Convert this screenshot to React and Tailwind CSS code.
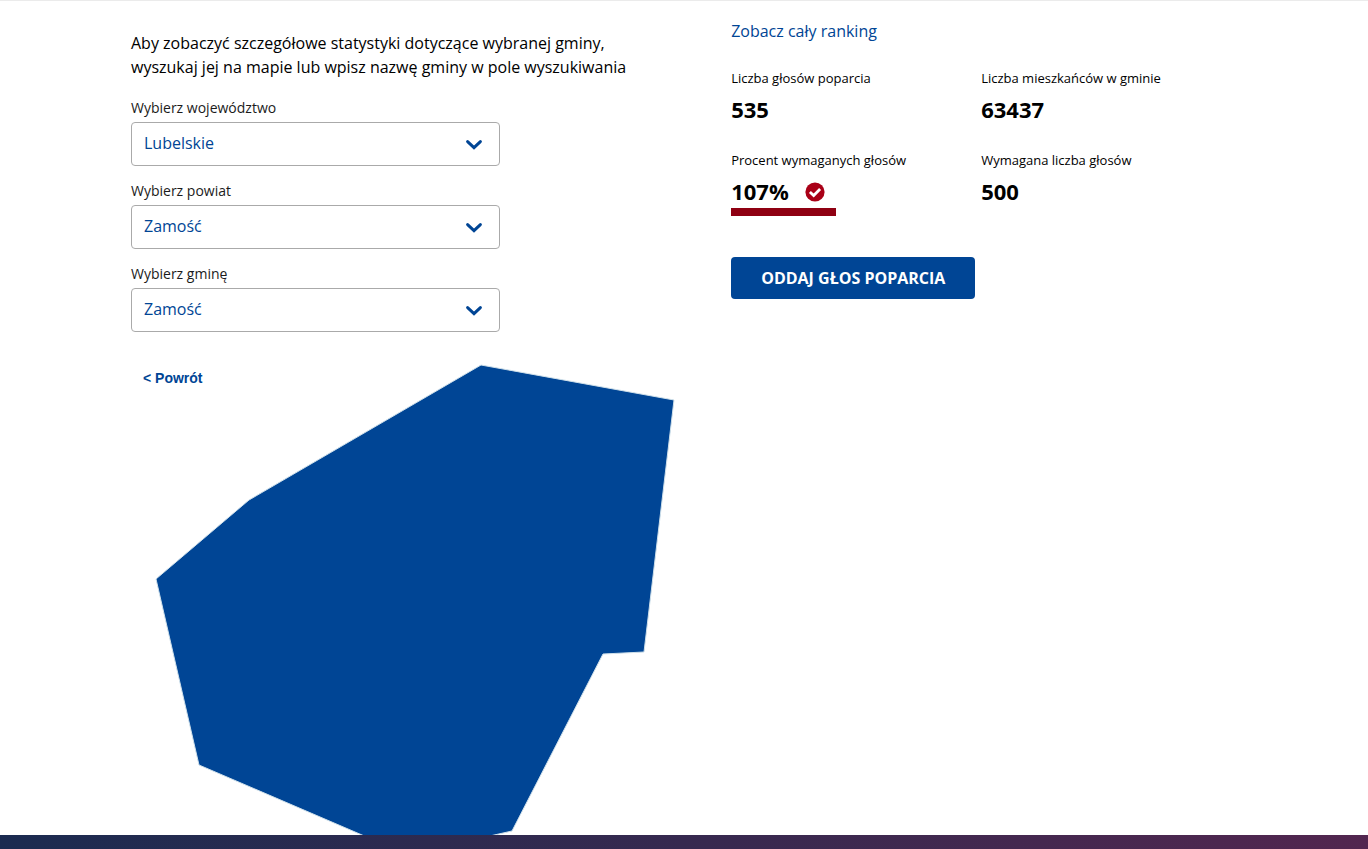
import React, { useState } from "react";

const REGIONS = {
  voivodeships: ["Lubelskie", "Mazowieckie", "Podkarpackie"],
  counties: ["Zamość", "Lublin", "Chełm"],
  communes: ["Zamość", "Lublin", "Chełm"],
};

const SelectField = ({ id, label, value, options, onChange }) => (
  <div className="flex flex-col gap-1">
    <label htmlFor={id} className="text-sm leading-5 text-[#1b1b1b]">
      {label}
    </label>
    <div className="relative">
      <select
        id={id}
        value={value}
        onChange={(e) => onChange(e.target.value)}
        className="h-11 w-full appearance-none rounded border border-[#aaaaaa] bg-white px-3 pb-0.5 text-base leading-6 text-[#004595]"
      >
        {options.map((option) => (
          <option key={option} value={option}>
            {option}
          </option>
        ))}
      </select>
      <svg
        className="pointer-events-none absolute right-4 top-4 h-3 w-5"
        viewBox="0 0 20 12"
        fill="none"
        stroke="#004595"
        strokeWidth="3"
        strokeLinecap="round"
        strokeLinejoin="miter"
      >
        <path d="M3.6 3.6 L10 9.6 L16.4 3.6" />
      </svg>
    </div>
  </div>
);

const Stat = ({ label, value, children }) => (
  <div>
    <p className="text-[13px] leading-5">{label}</p>
    <div className="mt-2.5 flex items-center gap-4">
      <p className="pb-0.5 text-[22px] font-bold leading-[22px]">{value}</p>
      {children}
    </div>
  </div>
);

const CheckIcon = () => (
  <svg className="h-5 w-5" viewBox="0 0 20 20">
    <circle cx="10" cy="10" r="9.6" fill="#a90017" />
    <path
      d="M4.9 9.9 L8.7 13.5 L15.1 7.1"
      fill="none"
      stroke="#fff"
      strokeWidth="2.8"
    />
  </svg>
);

const App = () => {
  const [voivodeship, setVoivodeship] = useState("Lubelskie");
  const [county, setCounty] = useState("Zamość");
  const [commune, setCommune] = useState("Zamość");

  return (
    <div className="flex min-h-screen flex-col border-t border-[#ebebeb] bg-white font-['Open_Sans',sans-serif] text-black">
      <main className="grid flex-1 grid-cols-[13fr_11fr] pl-[131px] pr-[129px]">
        {/* search and map */}
        <section className="pt-[30px]">
          <p className="max-w-[520px] text-base leading-6">
            Aby zobaczyć szczegółowe statystyki dotyczące wybranej gminy,
            wyszukaj jej na mapie lub wpisz nazwę gminy w pole wyszukiwania
          </p>
          <form className="mt-[19px] flex max-w-[369px] flex-col gap-[15px]">
            <SelectField
              id="voivodeship"
              label="Wybierz województwo"
              value={voivodeship}
              options={REGIONS.voivodeships}
              onChange={setVoivodeship}
            />
            <SelectField
              id="county"
              label="Wybierz powiat"
              value={county}
              options={REGIONS.counties}
              onChange={setCounty}
            />
            <SelectField
              id="commune"
              label="Wybierz gminę"
              value={commune}
              options={REGIONS.communes}
              onChange={setCommune}
            />
          </form>
          <div className="relative mt-3 max-w-[570px]">
            <svg className="block w-full" viewBox="0 0 570 491">
              <path
                d="M350 21 L543 56 L513 308 L472 310 L381 487 L310 503 L245 497 L68 421 L25 235 L118 156 Z"
                fill="#004595"
                stroke="#cfe0ea"
                strokeWidth="1"
              />
            </svg>
            <button
              type="button"
              className="absolute left-3 top-6 font-['Liberation_Sans',sans-serif] text-sm font-bold leading-5 text-[#004595]"
            >
              &lt; Powrót
            </button>
          </div>
        </section>

        {/* commune statistics */}
        <section className="pt-[18px]">
          <a href="#ranking" className="block text-base leading-6 text-[#004595]">
            Zobacz cały ranking
          </a>
          <div className="mt-[25px] grid max-w-[500px] grid-cols-2 gap-y-7">
            <Stat label="Liczba głosów poparcia" value="535" />
            <Stat label="Liczba mieszkańców w gminie" value="63437" />
            <div>
              <Stat label="Procent wymaganych głosów" value="107%">
                <CheckIcon />
              </Stat>
              <div className="mt-1 h-2 w-[105px] bg-[#8f0012]" />
            </div>
            <Stat label="Wymagana liczba głosów" value="500" />
          </div>
          <button
            type="button"
            className="mt-[41px] h-[42px] rounded bg-[#004595] px-[30px] text-base font-bold text-white"
          >
            ODDAJ GŁOS POPARCIA
          </button>
        </section>
      </main>
      <footer className="h-3.5 bg-linear-to-r from-[#1b2b50] via-[#36294f] to-[#52264f]" />
    </div>
  );
};

export default App;
